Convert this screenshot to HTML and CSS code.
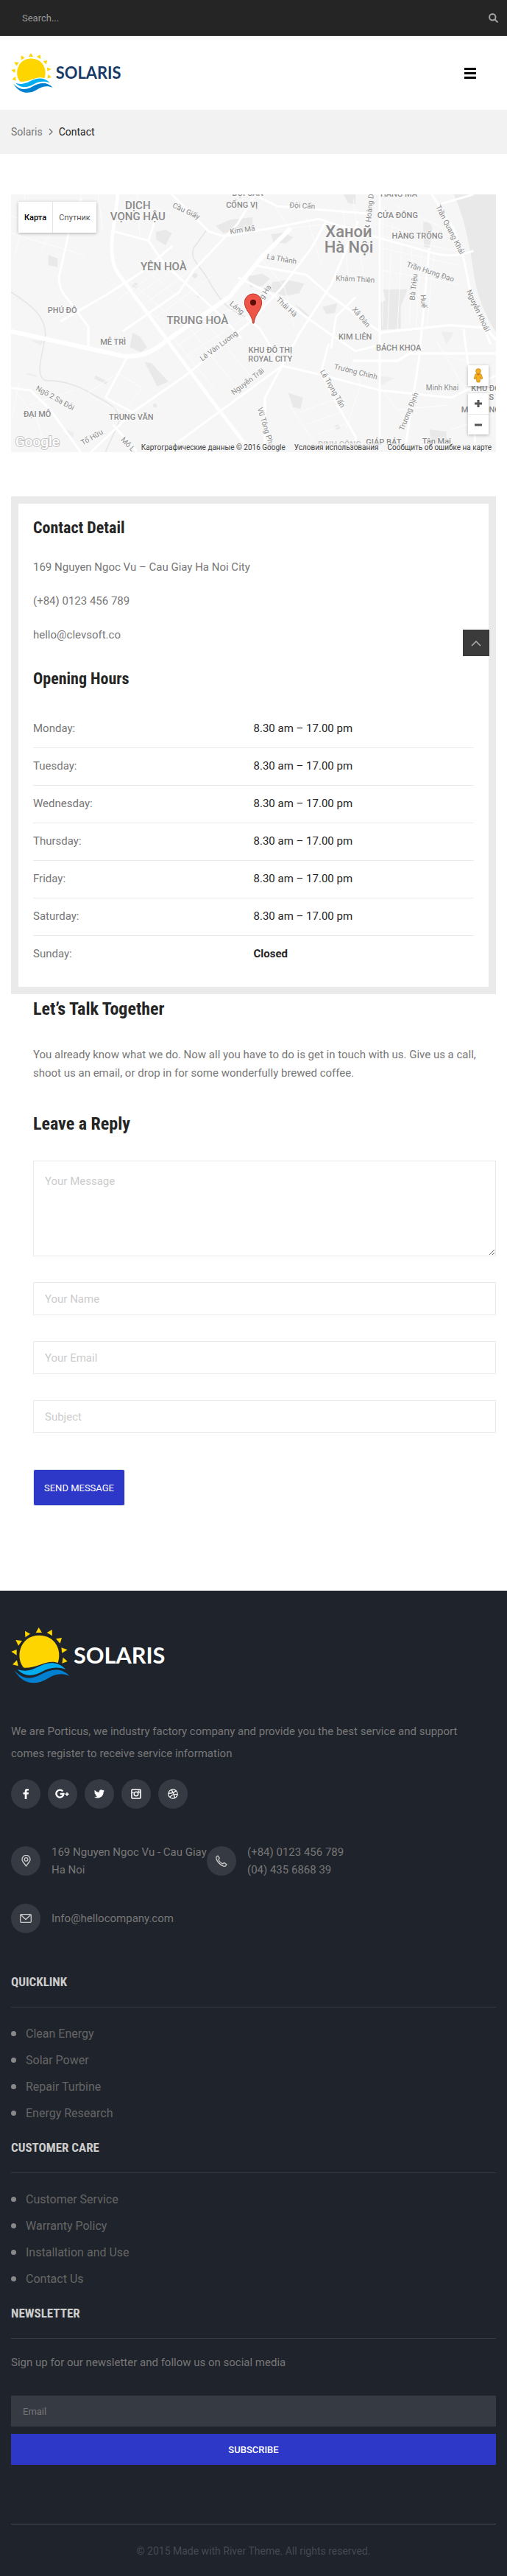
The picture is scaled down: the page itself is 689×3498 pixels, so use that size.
FILE: index.html
```html
<!DOCTYPE html>
<html lang="en">

<head>
    <meta charset="UTF-8">
    <meta name="viewport" content="width=device-width, initial-scale=1.0">
    <title>Contact - Solaris</title>
    <link rel="stylesheet" href="styles.css">
</head>

<body>
    <!-- shared logo mark -->
    <svg class="defs" width="0" height="0" aria-hidden="true">
        <symbol id="sun" viewBox="45 30 240 228">
            <g fill="#ffd500">
                <path d="M98 194C62 160 76 62 160 62c66 0 94 62 76 112-46-16-80 22-138 20z" />
                <path d="M158 30l13 21h-25zM102 44l21 12-20 14zM212 39l1 25-22-13zM64 81l26 3-15 20zM252 72l-7 23-17-19zM46 128l22-8v23zM250 112l25 9-22 13zM51 181l18-18 5 24zM257 152l18 16-22 8z" />
            </g>
            <path fill="#00aeef" d="M71 201c35 10 55 5 85-11 40-20 78-23 111 10-36-13-68-6-96 10-34 20-71 22-100-9z" />
            <path fill="#0080d0" d="M58 203c33 39 68 40 107 19 41-22 84-32 119 6-35-16-63-6-93 12-55 33-106 12-133-37z" />
        </symbol>
    </svg>

    <form class="top-search">
        <input type="search" aria-label="Search" placeholder="Search...">
        <button type="submit" aria-label="Search">
            <svg width="13" height="13" viewBox="0 0 13 13" fill="none" stroke="#a5a5a5" stroke-width="2">
                <circle cx="5.3" cy="5.3" r="4.2" />
                <path d="M8.4 8.4l4 4" />
            </svg>
        </button>
    </form>

    <header class="header">
        <a class="logo" href="#">
            <svg viewBox="45 30 630 228" role="img" aria-label="Solaris">
                <use href="#sun" x="45" y="30" width="240" height="228" />
                <text x="300" y="176">SOLARIS</text>
            </svg>
        </a>
        <button class="menu-toggle" aria-label="Menu">
            <span></span><span></span><span></span>
        </button>
    </header>

    <nav class="breadcrumb" aria-label="Breadcrumb">
        <a href="#">Solaris</a>
        <svg width="6" height="10" viewBox="0 0 6 10" fill="none" stroke="#777" stroke-width="1.4">
            <path d="M1 1l4 4-4 4" />
        </svg>
        <span>Contact</span>
    </nav>

    <main class="main">
        <div class="map">
            <svg class="map-canvas" viewBox="45 42 1977 1050" preserveAspectRatio="xMidYMid slice">
                <!-- parks and lakes -->
                <g fill="#e9e9e9">
                    <path d="M1850 42h172v560c-30-40-70-130-84-200-18-120-40-260-88-360z" />
                    <path d="M635 195l40-10 25 15-25 50-38-25zM197 288l38 15v35l-38-8zM880 170l60-25 90-10v65l-80-5-40 5z" />
                    <path d="M1562 430l100-2-28 70v90l-80 5-4-110 22-10zM1725 155q35-5 38 30l-12 75-22-4z" />
                    <path d="M540 605l30 15 30 45-25 20-45-20zM590 725l28 5 68 75-45 20zM390 780l50 25-8 10-48-22z" />
                    <path d="M1110 400l60-10 70 15-20 40-60 10-60-20zM1010 375l60-10 30 20-30 30-50 5zM1105 205l50-8 40 20-30 25-50-5z" />
                    <path d="M1175 850l60 20-10 45-30-5zM1200 490l20 10 40 35-8 8zM1315 500l60-15-10 40-35 5zM1400 42h50v40l-30-5zM1750 1000l70 8v60l-60-5z" />
                    <path d="M1800 600l50 5-30 50zM1530 780l80 10-60 30zM125 635l60 5-20 18zM110 768l40 12v6l-40-10zM270 1000l30 10v20h-30z" opacity=".6" />
                    <circle cx="552" cy="413" r="11" />
                    <circle cx="795" cy="373" r="10" />
                    <circle cx="812" cy="455" r="9" />
                    <circle cx="632" cy="902" r="8" />
                    <circle cx="1376" cy="990" r="10" />
                </g>
                <!-- rivers -->
                <g fill="none" stroke="#e6e6e6" stroke-width="5">
                    <path d="M45 440c80 50 145 100 140 180-10 70-45 160 0 180 90 0 150 30 200 60 70 40 100 50 100 110l-55 120" />
                    <path d="M840 190l-50 70c-20 50 30 70 70 150 50 80 70 100 140 130" />
                </g>
                <!-- side streets -->
                <g fill="none" stroke="#fff" stroke-width="3" opacity=".8">
                    <path d="M45 130l200 60 60-120M100 42v90l-40 160M170 270l100-200M45 200l300 90M330 42l30 150M400 42l20 150M560 42l10 170M520 60l180 60" />
                    <path d="M440 380l240 200M480 350l240 210M560 320l260 220M600 480l220-160M560 450l200-140M640 540l230-170M480 470l180-130" />
                    <path d="M700 620l180 220M760 570l190 240M820 540l200 240M720 660l260-180M760 700l260-170" />
                    <path d="M60 840l90 120 40 130M80 800l-30 150M120 900l180-60M360 850l120-80 100 60-80 100-120-60z" />
                    <path d="M1100 60l80 120 180-20M1060 300l100 120 40 160M1250 130l60 200M1400 100l20 300M1440 60l40 300" />
                    <path d="M1560 80v500M1600 160l-20 430M1640 200l-20 400M1680 240l-10 330M1720 270l-25 320M1770 280l-30 300M1550 210l300 60M1550 260l320 70M1550 350l330 60M1550 160l200 60M1600 80l230 110" />
                    <path d="M1180 900l100 150M1220 930l160-60M1250 980l160-60M1290 1020l140-50M1560 840l60 80 200-20M1780 640l120 200M1820 700l150 40M1840 1000l180-60M1430 700l40 120-60 180" />
                </g>
                <!-- main roads -->
                <g fill="none" stroke="#fff" stroke-width="9" stroke-linejoin="round">
                    <path d="M330 60l-50 140-40 180q0 50 30 80l90 120v80" />
                    <path d="M480 42c-10 120-50 240 0 320l210 285 185 250 150 195" stroke-width="14" />
                    <path d="M455 190l150 40 60 90 240 220 80 90M605 230l30-90" />
                    <path d="M245 560l190-110 140-90 130-110M500 600l230-160 60-90 180-190 70-118" />
                    <path d="M45 600l410 90q100 30 180-20l70-50 230-160 130-160 120-120" stroke-width="18" />
                    <path d="M430 870l85-160M430 870l110 60 230-160 250-210 130-140 120-160 60-110" />
                    <path d="M45 830l80 10 80 80 130 180M370 1092l180-170M460 980l100 110M700 1070l450-330 70-130 130-200 110-260" />
                    <path d="M700 42l150 150 60 20 180-30 210-40 220 70 250 70q80 20 160-10M1050 50l80 40 370 30" />
                    <path d="M1000 540l60 50 90 150-70 130v220M1150 740l130 30 270 70 290 30 180-90" />
                    <path d="M970 380l180 90 180 130 120 80 120-30M1030 330l220 40 90 80 220 160" />
                    <path d="M1548 42v1050" />
                    <path d="M1550 605l280-30 150 10 42 50M1440 720h180l50-30h350" stroke-width="10" />
                    <path d="M1760 42l90 140 40 120 30 150 80 200M1890 590l30 240 20 260M1750 260l-40 440-60 390M1800 80l130-38" />
                    <path d="M1310 770l60 120 80 140v60M1350 670l20-130 80-80M1340 650l-30 110" />
                </g>
                <!-- place names -->
                <g class="place" text-anchor="middle">
                    <text class="place-mid" x="562" y="101">DỊCH</text>
                    <text class="place-mid" x="562" y="147">VỌNG HẬU</text>
                    <text class="place-mid" x="667" y="350">YÊN HOÀ</text>
                    <text class="place-mid" x="805" y="570">TRUNG HOÀ</text>
                    <text class="place-big" x="1422" y="216">Ханой</text>
                    <text class="place-big" x="1422" y="279">Hà Nội</text>
                    <text x="986" y="95">CỐNG VỊ</text>
                    <text x="1010" y="47">ĐỘI CẤN</text>
                    <text x="1626" y="52">HÀNG MÃ</text>
                    <text x="1621" y="138">CỬA ĐÔNG</text>
                    <text x="1702" y="223">HÀNG TRỐNG</text>
                    <text x="254" y="524">PHÚ ĐÔ</text>
                    <text x="461" y="653">MỄ TRÌ</text>
                    <text x="1102" y="687">KHU ĐÔ THỊ</text>
                    <text x="1102" y="723">ROYAL CITY</text>
                    <text x="1448" y="632">KIM LIÊN</text>
                    <text x="1625" y="677">BÁCH KHOA</text>
                    <text x="152" y="948">ĐẠI MỖ</text>
                    <text x="535" y="959">TRUNG VĂN</text>
                    <text x="1384" y="1072" opacity=".5">ĐỊNH CÔNG</text>
                    <text x="1564" y="1063">GIÁP BÁT</text>
                    <text x="1780" y="1059">Tân Mai</text>
                    <text x="1980" y="843">KHU ĐÔ</text>
                    <text x="1965" y="879">TIMES</text>
                    <text x="1960" y="929">MAI ĐỘNG</text>
                </g>
                <!-- street names -->
                <g class="street" text-anchor="middle">
                    <text transform="translate(755 119) rotate(25)">Cầu Giấy</text>
                    <text transform="translate(990 196) rotate(-8)">Kim Mã</text>
                    <text transform="translate(1232 98) rotate(3)">Đội Cấn</text>
                    <text transform="translate(1518 95) rotate(-84)">Hoàng D.</text>
                    <text transform="translate(1826 190) rotate(63)">Trần Quang Khải</text>
                    <text transform="translate(1147 315) rotate(10)">La Thành</text>
                    <text transform="translate(1448 397) rotate(3)">Khâm Thiên</text>
                    <text transform="translate(1752 367) rotate(18)">Trần Hưng Đạo</text>
                    <text transform="translate(1696 420) rotate(-84)">Bà Triệu</text>
                    <text transform="translate(1717 478) rotate(85)">Huế</text>
                    <text transform="translate(1940 520) rotate(65)">Nguyễn Khoái</text>
                    <text transform="translate(960 512) rotate(40)">Láng</text>
                    <text transform="translate(1090 445) rotate(-58)">g Hạ</text>
                    <text transform="translate(1162 508) rotate(43)">Thái Hà</text>
                    <text transform="translate(1465 548) rotate(50)">Xã Đàn</text>
                    <text transform="translate(898 667) rotate(-37)">Lê Văn Lương</text>
                    <text transform="translate(1016 812) rotate(-37)">Nguyễn Trãi</text>
                    <text transform="translate(1448 774) rotate(14)">Trường Chinh</text>
                    <text transform="translate(1347 838) rotate(60)">Lê Trọng Tấn</text>
                    <text transform="translate(1803 841)">Minh Khai</text>
                    <text transform="translate(1676 930) rotate(-68)">Trương Định</text>
                    <text transform="translate(1074 994) rotate(73)">Vũ Tông Pha</text>
                    <text transform="translate(220 880) rotate(29)">Ngõ 2 Sa Đôi</text>
                    <text transform="translate(380 1040) rotate(-30)">Tố Hữu</text>
                    <text transform="translate(517 1070) rotate(46)">Mỗ L.</text>
                </g>
                <!-- marker -->
                <path d="M1031 567c-4-40-34-52-34-85a35 35 0 0 1 70 0c0 33-28 45-32 85z" fill="#ee5548" stroke="#b93a30" stroke-width="3" />
                <circle cx="1032" cy="482" r="12" fill="#5c0d0a" />
                <text class="map-brand" x="62" y="1067">Google</text>
            </svg>
            <div class="map-type">
                <button class="active">Карта</button>
                <button>Спутник</button>
            </div>
            <div class="map-tools">
                <button class="map-pegman" aria-label="Street View">
                    <svg width="14" height="20" viewBox="0 0 14 20" fill="#f5b01d" stroke="#b87c10" stroke-width=".6">
                        <path d="M3 8q4-2 8 0l2 6-2 1-1-3-1 7H5l-1-7-1 3-2-1z" />
                        <circle cx="7" cy="4" r="3.4" />
                        <path d="M5 8l2 2 2-2z" fill="#e65a1e" stroke="none" />
                    </svg>
                </button>
                <div class="map-zoom">
                    <button aria-label="Zoom in">
                        <svg width="12" height="12" viewBox="0 0 12 12" stroke="#555" stroke-width="3">
                            <path d="M6 1v10M1 6h10" />
                        </svg>
                    </button>
                    <button aria-label="Zoom out">
                        <svg width="12" height="12" viewBox="0 0 12 12" stroke="#555" stroke-width="3">
                            <path d="M1 6h10" />
                        </svg>
                    </button>
                </div>
            </div>
            <div class="map-legal">
                <span>Картографические данные © 2016 Google</span>
                <a href="#">Условия использования</a>
                <a href="#">Сообщить об ошибке на карте</a>
            </div>
        </div>

        <section class="contact-box">
            <h2>Contact Detail</h2>
            <p>169 Nguyen Ngoc Vu – Cau Giay Ha Noi City</p>
            <p>(+84) 0123 456 789</p>
            <p>hello@clevsoft.co</p>
            <h2>Opening Hours</h2>
            <table class="hours">
                <tr><th scope="row">Monday:</th><td>8.30 am – 17.00 pm</td></tr>
                <tr><th scope="row">Tuesday:</th><td>8.30 am – 17.00 pm</td></tr>
                <tr><th scope="row">Wednesday:</th><td>8.30 am – 17.00 pm</td></tr>
                <tr><th scope="row">Thursday:</th><td>8.30 am – 17.00 pm</td></tr>
                <tr><th scope="row">Friday:</th><td>8.30 am – 17.00 pm</td></tr>
                <tr><th scope="row">Saturday:</th><td>8.30 am – 17.00 pm</td></tr>
                <tr><th scope="row">Sunday:</th><td><strong>Closed</strong></td></tr>
            </table>
            <a class="to-top" href="#" aria-label="Back to top">
                <svg width="14" height="9" viewBox="0 0 14 9" fill="none" stroke="#aaa" stroke-width="1.6">
                    <path d="M1 8l6-6 6 6" />
                </svg>
            </a>
        </section>

        <section class="talk">
            <h2>Let’s Talk Together</h2>
            <p>You already know what we do. Now all you have to do is get in touch with us. Give us a call, shoot us an email, or drop in for some wonderfully brewed coffee.</p>
            <h2>Leave a Reply</h2>
            <form class="reply-form">
                <textarea aria-label="Your Message" placeholder="Your Message"></textarea>
                <input type="text" aria-label="Your Name" placeholder="Your Name">
                <input type="email" aria-label="Your Email" placeholder="Your Email">
                <input type="text" aria-label="Subject" placeholder="Subject">
                <button type="submit">SEND MESSAGE</button>
            </form>
        </section>
    </main>

    <footer class="footer">
        <a class="logo logo-footer" href="#">
            <svg viewBox="45 30 630 228" role="img" aria-label="Solaris">
                <use href="#sun" x="45" y="30" width="240" height="228" />
                <text x="300" y="176">SOLARIS</text>
            </svg>
        </a>
        <p class="about">We are Porticus, we industry factory company and provide you the best service and support comes register to receive service information</p>
        <div class="social">
            <a href="#" aria-label="Facebook">
                <svg width="14" height="14" viewBox="0 0 14 14" fill="#fff">
                    <path d="M11 .2v2.3H9.6c-1 0-1.2.4-1.2 1.1V5H11l-.4 2.4H8.400V14H5.700V7.400H3.500V5h2.200V3.200C5.700 1.200 7 .1 8.900.1c1 0 1.800.1 2.100.1z" />
                </svg>
            </a>
            <a href="#" aria-label="Google Plus">
                <svg width="20" height="14" viewBox="0 0 20 14">
                    <path d="M10.200 3.400A5 5 0 1 0 11.400 7H6.800" fill="none" stroke="#fff" stroke-width="2.400" />
                    <path d="M15.200 5h1.600v1.500h1.800v1.600h-1.800v1.600h-1.600V8.100h-1.700V6.500h1.700z" fill="#fff" />
                </svg>
            </a>
            <a href="#" aria-label="Twitter">
                <svg width="14" height="14" viewBox="0 0 14 14" fill="#fff">
                    <path d="M14 2.800c-.4.600-.9 1.100-1.400 1.500.2 5.300-4 8.300-8 8.300-1.700 0-3.300-.5-4.600-1.300 1.600.1 3-.3 4.200-1.200-1.300 0-2.300-.9-2.700-2 .4.100.8 0 1.200-.1C1.300 7.700.4 6.500.4 5.100c.4.200.8.400 1.300.4C.4 4.500 0 2.900.8 1.700 2.300 3.500 4.400 4.600 6.800 4.700 6.400 2.900 7.700 1.200 9.600 1.200c.8 0 1.600.4 2.100.9.700-.1 1.200-.4 1.800-.7-.2.700-.7 1.200-1.200 1.600.6-.1 1.100-.2 1.700-.2z" />
                </svg>
            </a>
            <a href="#" aria-label="Instagram">
                <svg width="14" height="14" viewBox="0 0 14 14" fill="none" stroke="#fff">
                    <rect x="1" y="1" width="12" height="12" rx="1" stroke-width="1.600" />
                    <circle cx="7" cy="7" r="2.800" stroke-width="1.500" />
                    <path d="M9.500 3.500h2" stroke-width="2" />
                    <path d="M1 5.400h3M10 5.400h3" stroke-width="1" />
                </svg>
            </a>
            <a href="#" aria-label="Dribbble">
                <svg width="14" height="14" viewBox="0 0 14 14" fill="none" stroke="#fff" stroke-width="1.200">
                    <circle cx="7" cy="7" r="6.200" />
                    <path d="M4.700 1.200Q8.500 6 9.500 12.600M.8 6.200Q8 6.200 11.400 2.500M2.900 11.600Q5.500 6.800 13.200 7.600" />
                </svg>
            </a>
        </div>
        <address class="contacts">
            <div class="contact-item">
                <span class="contact-icon">
                    <svg width="13" height="16" viewBox="0 0 13 16" fill="none" stroke="#ccc" stroke-width="1.300">
                        <path d="M6.500 15C4.500 11.500 1 9 1 5.900a5.500 5.500 0 0 1 11 0C12 9 8.500 11.500 6.500 15z" />
                        <circle cx="6.500" cy="5.900" r="2.300" />
                    </svg>
                </span>
                <span>169 Nguyen Ngoc Vu - Cau Giay<br>Ha Noi</span>
            </div>
            <div class="contact-item">
                <span class="contact-icon">
                    <svg width="16" height="16" viewBox="0 0 16 16" fill="none" stroke="#ccc" stroke-width="1.300" stroke-linejoin="round">
                        <path d="M1 2.500L3 1l2.300 3.400-1.400 1.500c.8 2.500 3.300 5 5.800 6l1.700-1.500 3.600 2.300-1.500 2.200c-1 .6-3.500.2-5.700-1.300C4.500 11.300 2 8.500 1.200 5.500.8 4.200.7 3.200 1 2.500z" />
                    </svg>
                </span>
                <span>(+84) 0123 456 789<br>(04) 435 6868 39</span>
            </div>
            <div class="contact-item">
                <span class="contact-icon">
                    <svg width="16" height="12" viewBox="0 0 16 12" fill="none" stroke="#ccc" stroke-width="1.300">
                        <rect x=".7" y=".7" width="14.600" height="10.600" rx="1" />
                        <path d="M1 1l7 6.500L15 1" />
                    </svg>
                </span>
                <span>Info@hellocompany.com</span>
            </div>
        </address>

        <section class="footer-block">
            <h3>QUICKLINK</h3>
            <ul>
                <li><a href="#">Clean Energy</a></li>
                <li><a href="#">Solar Power</a></li>
                <li><a href="#">Repair Turbine</a></li>
                <li><a href="#">Energy Research</a></li>
            </ul>
        </section>
        <section class="footer-block">
            <h3>CUSTOMER CARE</h3>
            <ul>
                <li><a href="#">Customer Service</a></li>
                <li><a href="#">Warranty Policy</a></li>
                <li><a href="#">Installation and Use</a></li>
                <li><a href="#">Contact Us</a></li>
            </ul>
        </section>
        <section class="footer-block">
            <h3>NEWSLETTER</h3>
            <p>Sign up for our newsletter and follow us on social media</p>
            <form class="newsletter">
                <input type="email" aria-label="Email" placeholder="Email">
                <button type="submit">SUBSCRIBE</button>
            </form>
        </section>
        <p class="copyright">© 2015 Made with River Theme. All rights reserved.</p>
    </footer>
</body>

</html>
```
FILE: styles.css
```css
* {
    box-sizing: border-box;
}

body {
    margin: 0;
    background-color: #fff;
    color: #777;
    font-family: Roboto, Arial, sans-serif;
    font-size: 15px;
    line-height: 25px;
}

a {
    color: inherit;
    text-decoration: none;
}

button,
input,
textarea {
    font-family: inherit;
    border: 0;
    border-radius: 0;
    margin: 0;
}

button {
    cursor: pointer;
}

h2,
h3,
p {
    margin: 0;
}

h2 {
    color: #252525;
    font-family: "Roboto Condensed", Roboto, Arial, sans-serif;
    font-size: 24px;
    font-weight: 700;
    line-height: 30px;
}

svg {
    display: block;
}

.defs {
    position: absolute;
}

/* Dark search strip */
.top-search {
    display: flex;
    align-items: center;
    justify-content: space-between;
    height: 49px;
    padding: 0 12px 0 30px;
    background-color: #252525;
    border-bottom: 1px solid #3b3b3b;
}

.top-search input {
    flex: 1;
    padding: 0;
    background: none;
    color: #999;
    font-size: 13px;
}

.top-search input::placeholder {
    color: #999;
}

.top-search button {
    padding: 0;
    background: none;
}

.header {
    display: flex;
    align-items: center;
    justify-content: space-between;
    height: 100px;
    padding: 0 42px 0 15px;
}

.logo {
    display: block;
    width: 150px;
}

.logo svg {
    width: 100%;
}

.logo text {
    fill: #173a68;
    font-family: Lato, sans-serif;
    font-size: 92px;
    font-weight: 700;
}

.menu-toggle {
    display: grid;
    gap: 3px;
    padding: 0;
    background: none;
}

.menu-toggle span {
    width: 16px;
    height: 3px;
    background-color: #000;
}

.breadcrumb {
    display: flex;
    align-items: center;
    gap: 8px;
    height: 60px;
    padding: 0 15px;
    background-color: #f2f2f2;
    font-size: 14px;
}

.breadcrumb span {
    color: #252525;
}

.main {
    padding: 55px 15px 115px;
}

/* Map */
.map {
    position: relative;
    height: 350px;
    margin-bottom: 60px;
    overflow: hidden;
    background-color: #f6f6f6;
}

.map-canvas {
    width: 100%;
    height: 100%;
}

.place {
    fill: #8a8a8a;
    font-size: 33px;
    font-weight: 500;
}

.place-mid {
    font-size: 45px;
}

.place-big {
    font-size: 66px;
}

.street {
    fill: #8c8c8c;
    font-size: 30px;
}

.place text,
.street text,
.map-brand {
    paint-order: stroke;
    stroke: #f9f9f9;
    stroke-width: 6px;
}

.map-brand {
    fill: #fff;
    stroke: #c4c4c4;
    font-size: 57px;
    font-weight: 500;
}

.map-type {
    position: absolute;
    top: 10px;
    left: 10px;
    display: flex;
    box-shadow: 0 1px 4px rgba(0, 0, 0, 0.3);
}

.map-type button {
    height: 42px;
    padding: 0 8px;
    background-color: #fff;
    color: #565656;
    font-size: 11px;
}

.map-type .active {
    border-right: 1px solid #e5e5e5;
    color: #000;
    font-weight: 500;
}

.map-tools {
    position: absolute;
    right: 10px;
    bottom: 24px;
    display: grid;
    gap: 10px;
}

.map-tools button {
    display: flex;
    align-items: center;
    justify-content: center;
    width: 28px;
    height: 28px;
    padding: 0;
    background-color: #fff;
}

.map-pegman,
.map-zoom {
    box-shadow: 0 1px 4px rgba(0, 0, 0, 0.3);
}

.map-zoom button + button {
    border-top: 1px solid #e6e6e6;
}

.map-legal {
    position: absolute;
    right: 0;
    bottom: 0;
    display: flex;
    gap: 12px;
    padding: 0 6px;
    background-color: rgba(245, 245, 245, 0.7);
    color: #444;
    font-size: 10px;
    line-height: 12px;
}

/* Contact details and opening hours */
.contact-box {
    position: relative;
    padding: 18px 20px 19px;
    border: 10px solid #eaeaea;
}

.contact-box p {
    margin-bottom: 21px;
}

.contact-box h2 {
    margin-bottom: 26px;
    font-size: 22px;
}

.contact-box p + h2 {
    margin: 32px 0 27px;
}

.hours {
    width: 100%;
    border-collapse: collapse;
}

.hours th,
.hours td {
    width: 50%;
    height: 51px;
    padding: 0;
    border-bottom: 1px solid #eaeaea;
    font-weight: 400;
    text-align: left;
}

.hours td {
    color: #252525;
}

.hours tr:last-child > * {
    border-bottom: 0;
}

.to-top {
    position: absolute;
    top: 171px;
    right: -1px;
    display: flex;
    align-items: center;
    justify-content: center;
    width: 36px;
    height: 36px;
    background-color: #3b3b3b;
}

/* Message form */
.talk {
    padding: 5px 0 0 30px;
}

.talk p {
    margin: 35px 0 41px;
}

.reply-form {
    display: flex;
    flex-direction: column;
    gap: 35px;
    margin-top: 35px;
}

.reply-form input,
.reply-form textarea {
    width: 100%;
    height: 45px;
    padding: 0 15px;
    border: 1px solid #eaeaea;
    background-color: #fff;
    color: #252525;
    font-size: 15px;
}

.reply-form textarea {
    height: 130px;
    padding: 15px;
    line-height: 25px;
}

.reply-form ::placeholder {
    color: #ccc;
}

.reply-form button {
    align-self: flex-start;
    height: 50px;
    margin-top: 14px;
    padding: 0 14px;
    border: 1px solid #eaeaea;
    border-radius: 3px;
    background-color: #2d37c8;
    color: #fff;
    font-size: 13px;
}

/* Footer */
.footer {
    padding: 50px 15px 0;
    background-color: #1f232b;
}

.logo-footer {
    width: 210px;
}

.logo-footer text {
    fill: #fff;
}

.about {
    margin: 50px 0 20px;
    padding-right: 30px;
    line-height: 30px;
}

.social {
    display: flex;
    gap: 10px;
}

.social a,
.contact-icon {
    display: flex;
    flex: none;
    align-items: center;
    justify-content: center;
    width: 40px;
    height: 40px;
    border-radius: 50%;
    background-color: #363a43;
}

.contacts {
    display: flex;
    flex-wrap: wrap;
    row-gap: 30px;
    margin: 47px 0 44px;
    font-style: normal;
    line-height: 24px;
}

.contact-item {
    display: flex;
    flex: 0 0 266px;
    align-items: center;
    gap: 15px;
    min-height: 48px;
    white-space: nowrap;
}

.contact-item:last-child {
    flex-basis: 100%;
}

.footer-block h3 {
    padding: 5px 0 21px;
    border-bottom: 1px solid #363a43;
    color: #ccc;
    font-family: "Roboto Condensed", Roboto, Arial, sans-serif;
    font-size: 17px;
    font-weight: 700;
    line-height: 26px;
}

.footer-block ul {
    margin: 0;
    padding: 17px 0 11px;
    list-style: none;
}

.footer-block li {
    display: flex;
    align-items: center;
    gap: 13px;
    height: 36px;
    color: #666;
    font-size: 16px;
}

.footer-block li::before {
    width: 7px;
    height: 7px;
    border-radius: 50%;
    background-color: #888;
    content: "";
}

.footer-block p {
    margin: 20px 0 32px;
}

.newsletter {
    display: grid;
    gap: 10px;
}

.newsletter input,
.newsletter button {
    width: 100%;
    height: 42px;
    padding: 0 16px;
    background-color: #363a43;
    color: #ccc;
    font-size: 13px;
}

.newsletter ::placeholder {
    color: #777;
}

.newsletter button {
    background-color: #2d37c8;
    color: #fff;
    font-weight: 500;
}

.copyright {
    margin-top: 80px;
    padding: 24px 0 21px;
    border-top: 1px solid #464a52;
    color: #464a52;
    font-size: 14px;
    text-align: center;
}
```
